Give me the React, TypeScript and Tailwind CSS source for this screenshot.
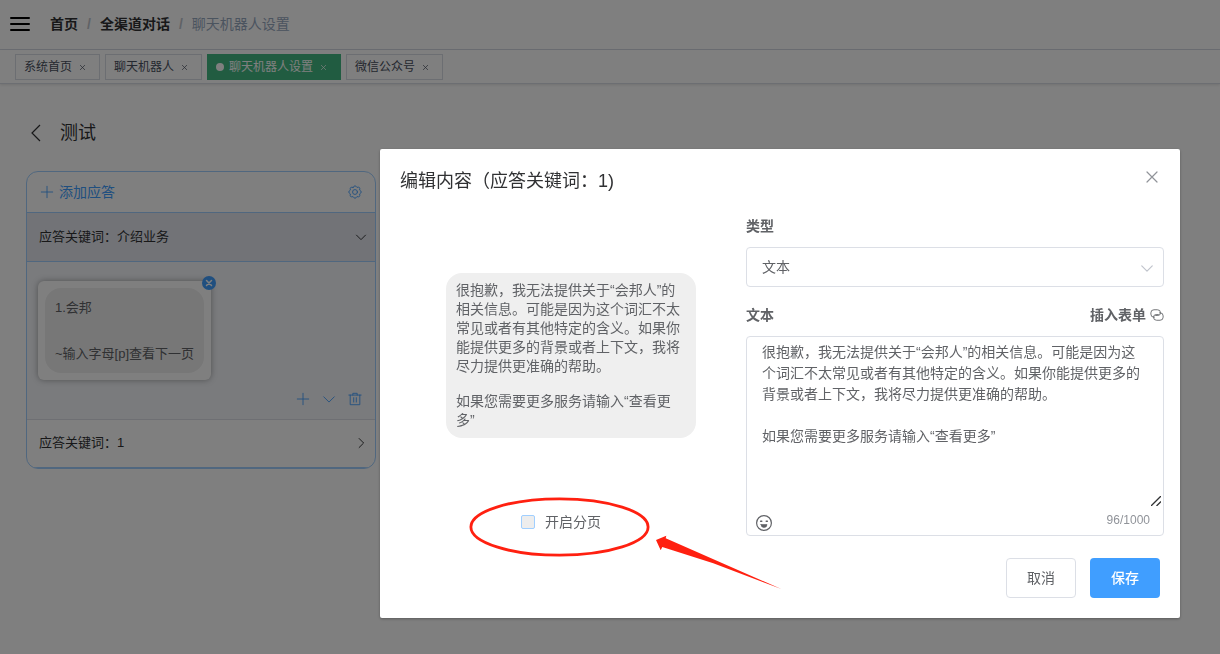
import { useState } from 'react'
import type { ReactNode } from 'react'

const tabs = [
  { title: '系统首页', active: false },
  { title: '聊天机器人', active: false },
  { title: '聊天机器人设置', active: true },
  { title: '微信公众号', active: false },
]

const answer = '很抱歉，我无法提供关于“会邦人”的相关信息。可能是因为这个词汇不太常见或者有其他特定的含义。如果你能提供更多的背景或者上下文，我将尽力提供更准确的帮助。'
const tip = '如果您需要更多服务请输入“查看更多”'

function Icon({ className, children }: { className: string; children: ReactNode }) {
  return (
    <svg viewBox="0 0 16 16" fill="none" stroke="currentColor" strokeLinecap="round" strokeLinejoin="round" className={className} aria-hidden="true">
      {children}
    </svg>
  )
}

const Close = ({ className }: { className: string }) => (
  <Icon className={className}><path d="M3 3l10 10M13 3L3 13" /></Icon>
)

const Plus = ({ className }: { className: string }) => (
  <Icon className={className}><path d="M8 1.5v13M1.5 8h13" /></Icon>
)

const ChevronDown = ({ className }: { className: string }) => (
  <Icon className={className}><path d="M2 5.5l6 6 6-6" /></Icon>
)

function Header() {
  return (
    <header>
      <div className="flex h-[50px] items-center border-b border-[#d8dce5] pb-0.5 pl-2.5">
        <button type="button" aria-label="菜单" className="mr-5">
          <svg viewBox="0 0 20 16" className="h-4 w-5" stroke="#000" strokeWidth="2" strokeLinecap="round">
            <path d="M1 2h18M1 8h18M1 14h18" />
          </svg>
        </button>
        <nav className="flex items-center text-[14px] leading-5">
          <a href="#" className="font-bold text-[#303133]">首页</a>
          <span className="mx-[9px] font-bold text-[#c0c4cc]">/</span>
          <a href="#" className="font-bold text-[#303133]">全渠道对话</a>
          <span className="mx-[9px] font-bold text-[#c0c4cc]">/</span>
          <span className="text-[#97a8be]">聊天机器人设置</span>
        </nav>
      </div>
      <div className="flex h-[34px] items-center gap-[5px] border-b border-[#d8dce5] pl-[15px] shadow-[0_1px_3px_0_rgba(0,0,0,0.12)]">
        {tabs.map((tab) => (
          <a
            key={tab.title}
            href="#"
            className={
              tab.active
                ? 'flex h-[26px] items-center border border-[#42b983] bg-[#42b983] px-2 text-[12px] text-white'
                : 'flex h-[26px] items-center border border-[#d8dce5] bg-white px-2 text-[12px] text-[#495060]'
            }
          >
            {tab.active && <span className="mr-[5px] size-2 rounded-full bg-white" />}
            {tab.title}
            <Close className="mt-0.5 mr-[5px] ml-[7px] size-[7px] stroke-[1.6]" />
          </a>
        ))}
      </div>
    </header>
  )
}

function AnswerPanel() {
  return (
    <section className="w-[350px] max-w-full overflow-hidden rounded-[12px] border border-[#a0cfff] text-[13px] text-[#303133]">
      <div className="flex h-[41px] items-center justify-between border-b border-[#a0cfff] px-[13px] text-[#409eff]">
        <button type="button" className="flex items-center gap-[5px] text-[14px]">
          <Plus className="size-3.5" />
          添加应答
        </button>
        <button type="button" aria-label="设置">
          <Icon className="size-3.5">
            <path d="M5.8 2.7Q8-1 10.2 2.700 14.400 1.600 13.300 5.800 17 8 13.300 10.200 14.400 14.400 10.200 13.300 8 17 5.800 13.300 1.600 14.400 2.700 10.200-1 8 2.700 5.800 1.600 1.600 5.800 2.700z" />
            <circle cx="8" cy="8" r="2.8" />
          </Icon>
        </button>
      </div>
      <button type="button" className="flex h-[49px] w-full items-center justify-between border-b border-[#a0cfff] bg-[#e4e7ef] pr-2 pl-3">
        应答关键词：介绍业务
        <ChevronDown className="size-3 stroke-[1.3]" />
      </button>
      <div className="border-b border-[#dcdfe6] bg-[#f4f6fa] px-[11px] pt-[19px] pb-[13px]">
        <div className="relative w-[173px] rounded-[6px] bg-white p-[7px] text-[#606266] shadow-[0_0_6px_rgba(0,0,0,0.35)]">
          <div className="rounded-[16px] bg-[#efefef] px-2.5 py-2 leading-[23px]">
            <p>1.会邦</p>
            <p className="mt-[23px] whitespace-nowrap">~输入字母[p]查看下一页</p>
          </div>
          <button
            type="button"
            aria-label="删除"
            className="absolute -top-[5px] -right-[5px] flex size-3.5 items-center justify-center rounded-full bg-[#409eff] text-white"
          >
            <Close className="size-2 stroke-3" />
          </button>
        </div>
        <div className="mt-3 flex justify-end gap-3 pr-0.5 text-[#409eff]">
          <button type="button" aria-label="添加"><Plus className="size-3.5" /></button>
          <button type="button" aria-label="下移"><ChevronDown className="size-3.5" /></button>
          <button type="button" aria-label="删除应答">
            <Icon className="size-3.5">
              <path d="M1 3.5h14M5.5 3.5v-2h5v2M2.5 3.5v11h11v-11M6.5 6.5v5M9.5 6.5v5" />
            </Icon>
          </button>
        </div>
      </div>
      <button type="button" className="flex h-12 w-full items-center justify-between border-b border-[#a0cfff] pr-2 pb-0.5 pl-3">
        应答关键词：1
        <ChevronDown className="size-3 -rotate-90 stroke-[1.3]" />
      </button>
    </section>
  )
}

function EditDialog() {
  const [text, setText] = useState(`${answer}\n\n${tip}`)
  const [paging, setPaging] = useState(false)

  return (
    <div role="dialog" aria-labelledby="dialog-title" className="mr-10 mb-9 ml-auto w-[800px] rounded-[2px] bg-white pb-5 text-[14px] text-[#606266] shadow-[0_1px_3px_rgba(0,0,0,0.3)]">
      <div className="flex items-start justify-between px-5 pt-5">
        <h2 id="dialog-title" className="text-[18px] leading-6 text-[#303133]">编辑内容（应答关键词：1)</h2>
        <button type="button" aria-label="关闭" className="text-[#909399]">
          <Close className="size-4 stroke-[1.2]" />
        </button>
      </div>

      <div className="flex px-4 pt-[23px]">
        <div className="flex flex-1 flex-col items-center pt-[57px]">
          <div className="w-[250px] rounded-[16px] bg-[#efefef] px-2.5 py-2 leading-[19px]">
            <p>{answer}</p>
            <p className="mt-4">{tip}</p>
          </div>
          <div className="relative mt-[74px] pr-5">
            <label className="flex items-center gap-2.5 leading-5">
              <input
                type="checkbox"
                checked={paging}
                onChange={(e) => setPaging(e.target.checked)}
                className="size-3.5 appearance-none rounded-[2px] border border-[#a0cfff] bg-[#ededed] checked:bg-[#409eff]"
              />
              开启分页
            </label>
            {/* hand-drawn mark that points at the paging option */}
            <svg viewBox="0 0 320 100" fill="none" className="pointer-events-none absolute -top-[15px] -left-[53px] h-[100px] w-80 max-w-none" aria-hidden="true">
              <ellipse cx="91.5" cy="30" rx="88.6" ry="28.2" stroke="#ff2010" strokeWidth="2.8" />
              <path d="M188 43l10.3-4.3-.6 2.6L313.3 92l-68-25.7-51-16.3-1.6 3.3z" fill="#ff2010" />
            </svg>
          </div>
        </div>

        <div className="w-[418px] shrink-0">
          <label htmlFor="type" className="block leading-5 font-bold">类型</label>
          <div className="relative mt-[11px]">
            <select id="type" className="h-10 w-full appearance-none rounded-[4px] border border-[#dcdfe6] bg-white px-[15px] outline-none">
              <option>文本</option>
            </select>
            <ChevronDown className="pointer-events-none absolute top-3.5 right-2.5 size-3.5 stroke-[1.4] text-[#c0c4cc]" />
          </div>
          <div className="mt-[18px] flex items-center justify-between leading-5 font-bold">
            <label htmlFor="content">文本</label>
            <button type="button" className="flex items-center gap-1">
              插入表单
              <Icon className="size-3.5">
                <path d="M5 10.5h-.5A3.5 3.5 0 0 1 1 7V5.500A3.5 3.5 0 0 1 4.500 2h4A3.5 3.5 0 0 1 12 5.500a3 3 0 0 1-3 3H6.5" />
                <path d="M11 5.500h.5A3.5 3.5 0 0 1 15 9v1.500a3.5 3.5 0 0 1-3.500 3.500h-4A3.5 3.5 0 0 1 4 10.500a3 3 0 0 1 3-3h2.5" />
              </Icon>
            </button>
          </div>
          <div className="relative mt-[11px] rounded-[4px] border border-[#dcdfe6]">
            <textarea
              id="content"
              value={text}
              maxLength={1000}
              onChange={(e) => setText(e.target.value)}
              className="block h-[171px] w-full resize-none px-[15px] py-[5px] leading-[21px] outline-none"
            />
            <svg viewBox="0 0 10 10" className="pointer-events-none absolute top-[159px] right-0.5 size-2.5" stroke="#303133" strokeWidth="1.3" aria-hidden="true">
              <path d="M0 10L10 0M5.5 10L10 5.5" />
            </svg>
            <div className="flex h-[27px] items-start justify-between pr-[13px] pl-[9px]">
              <button type="button" aria-label="表情" className="pt-[7px]">
                <Icon className="size-4">
                  <circle cx="8" cy="8" r="7.4" strokeWidth="1.2" />
                  <path d="M4.6 6.2h1.2M10.2 6.2h1.2" strokeWidth="1.4" />
                  <path d="M5 9.5h6a3 3 0 0 1-6 0z" fill="currentColor" strokeWidth=".6" />
                </Icon>
              </button>
              <span className="pt-1 text-[12px] leading-4 text-[#909399]">96/1000</span>
            </div>
          </div>
        </div>
      </div>

      <div className="mt-[22px] flex justify-end gap-3.5 px-5">
        <button type="button" className="h-10 w-[70px] rounded-[4px] border border-[#dcdfe6] bg-white">取消</button>
        <button type="button" className="h-10 w-[70px] rounded-[4px] bg-[#409eff] font-medium text-white">保存</button>
      </div>
    </div>
  )
}

export default function App() {
  return (
    <div className="min-h-screen bg-white font-['Liberation_Sans','Noto_Sans_CJK_SC',sans-serif]">
      <Header />
      <main className="px-[26px] pt-9">
        <div className="mb-[25px] flex h-[26px] items-center gap-[19px] text-[18px] text-[#303133]">
          <button type="button" aria-label="返回">
            <svg viewBox="0 0 10 18" fill="none" stroke="currentColor" strokeWidth="1.2" className="ml-[5px] h-[18px] w-2.5">
              <path d="M9 1L1 9l8 8" />
            </svg>
          </button>
          <h1>测试</h1>
        </div>
        <AnswerPanel />
      </main>
      <div className="fixed inset-0 flex items-start overflow-auto bg-black/50 pt-[149px]">
        <EditDialog />
      </div>
    </div>
  )
}
